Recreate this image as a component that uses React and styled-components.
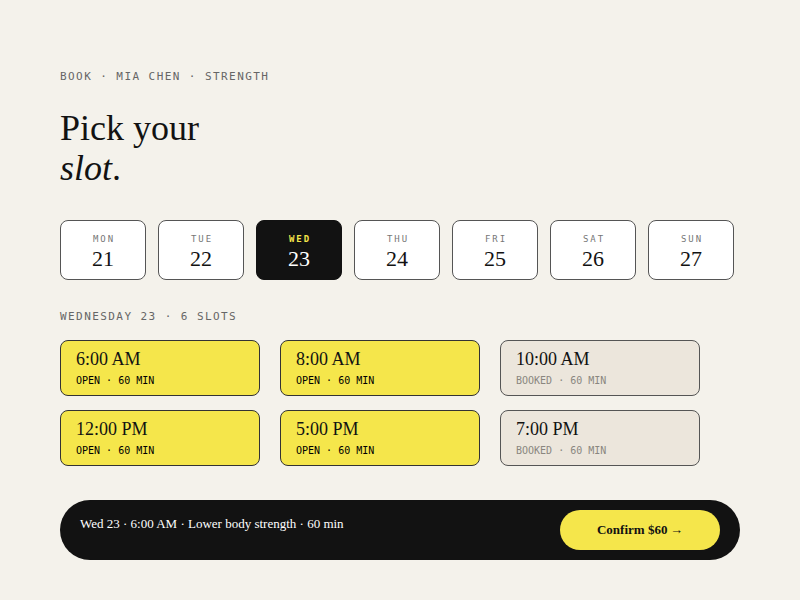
import styled, { createGlobalStyle } from 'styled-components';

const GlobalStyle = createGlobalStyle`
    html, body {
        margin: 0;
        padding: 0;
        background: #f4f2eb;
    }
    * {
        box-sizing: border-box;
    }
`;

const mono = `"DejaVu Sans Mono", "Liberation Mono", monospace`;
const serif = `"Liberation Serif", "Times New Roman", serif`;

const DAYS = [
    { name: 'MON', num: 21 },
    { name: 'TUE', num: 22 },
    { name: 'WED', num: 23, active: true },
    { name: 'THU', num: 24 },
    { name: 'FRI', num: 25 },
    { name: 'SAT', num: 26 },
    { name: 'SUN', num: 27 }
];

const SLOTS = [
    { time: '6:00 AM', open: true },
    { time: '8:00 AM', open: true },
    { time: '10:00 AM', open: false },
    { time: '12:00 PM', open: true },
    { time: '5:00 PM', open: true },
    { time: '7:00 PM', open: false }
];

const Page = styled.div`
    width: 800px;
    height: 600px;
    padding: 69px 60px 0;
    display: flex;
    flex-direction: column;
`;

const Eyebrow = styled.div`
    font-family: ${mono};
    font-size: 11px;
    line-height: 16px;
    letter-spacing: 0.13em;
    color: #666;
    text-transform: uppercase;
`;

const Title = styled.h1`
    margin: 23px 0 0;
    font-family: ${serif};
    font-weight: 400;
    font-size: 36px;
    line-height: 40px;
    color: #121212;
    em {
        font-style: italic;
    }
`;

const DayRow = styled.div`
    margin-top: 32px;
    display: grid;
    grid-template-columns: repeat(7, 86px);
    gap: 12px;
`;

const DayCard = styled.div`
    height: 60px;
    padding-top: 4px;
    border: 1px solid ${(p) => (p.$active ? '#121212' : '#555')};
    border-radius: 8px;
    background: ${(p) => (p.$active ? '#121212' : '#fff')};
    display: flex;
    flex-direction: column;
    align-items: center;
    justify-content: center;
    gap: 2px;
`;

const DayName = styled.div`
    font-family: ${mono};
    font-size: 9px;
    line-height: 11px;
    letter-spacing: 0.22em;
    padding-left: 0.22em;
    font-weight: ${(p) => (p.$active ? 700 : 400)};
    color: ${(p) => (p.$active ? '#f5e64b' : '#777')};
`;

const DayNum = styled.div`
    font-family: ${serif};
    font-size: 22px;
    line-height: 24px;
    color: ${(p) => (p.$active ? '#fff' : '#121212')};
`;

const SectionLabel = styled(Eyebrow)`
    margin-top: 29px;
`;

const SlotGrid = styled.div`
    margin-top: 15px;
    display: grid;
    grid-template-columns: repeat(3, 200px);
    column-gap: 20px;
    row-gap: 14px;
`;

const Slot = styled.div`
    height: 56px;
    padding: 7px 15px 0;
    border: 1px solid ${(p) => (p.$open ? '#333' : '#555')};
    border-radius: 8px;
    background: ${(p) => (p.$open ? '#f5e64b' : '#ece6dc')};
`;

const SlotTime = styled.div`
    font-family: ${serif};
    font-size: 18px;
    line-height: 22px;
    color: #121212;
`;

const SlotMeta = styled.div`
    margin-top: 5px;
    font-family: ${mono};
    font-size: 10px;
    line-height: 12px;
    color: ${(p) => (p.$open ? '#000' : '#8a8680')};
`;

const Bar = styled.div`
    margin-top: 34px;
    height: 60px;
    border-radius: 30px;
    background: #121212;
    padding: 10px 20px;
    display: flex;
    justify-content: space-between;
    align-items: flex-start;
`;

const Summary = styled.div`
    margin-top: 5px;
    font-family: ${serif};
    font-size: 13px;
    line-height: 17px;
    color: #fff;
`;

const ConfirmButton = styled.button`
    width: 160px;
    height: 40px;
    border: none;
    border-radius: 20px;
    background: #f5e64b;
    font-family: ${serif};
    font-weight: 700;
    font-size: 13px;
    color: #121212;
    cursor: pointer;
`;

export default function App() {
    return (
        <>
            <GlobalStyle />
            <Page>
                <Eyebrow>Book · Mia Chen · Strength</Eyebrow>
                <Title>
                    Pick your
                    <br />
                    <em>slot</em>.
                </Title>
                <DayRow>
                    {DAYS.map((d) => (
                        <DayCard key={d.num} $active={d.active}>
                            <DayName $active={d.active}>{d.name}</DayName>
                            <DayNum $active={d.active}>{d.num}</DayNum>
                        </DayCard>
                    ))}
                </DayRow>
                <SectionLabel>Wednesday 23 · 6 slots</SectionLabel>
                <SlotGrid>
                    {SLOTS.map((s) => (
                        <Slot key={s.time} $open={s.open}>
                            <SlotTime>{s.time}</SlotTime>
                            <SlotMeta $open={s.open}>{s.open ? 'OPEN' : 'BOOKED'} · 60 MIN</SlotMeta>
                        </Slot>
                    ))}
                </SlotGrid>
                <Bar>
                    <Summary>Wed 23 · 6:00 AM · Lower body strength · 60 min</Summary>
                    <ConfirmButton>Confirm $60&thinsp;→</ConfirmButton>
                </Bar>
            </Page>
        </>
    );
}
